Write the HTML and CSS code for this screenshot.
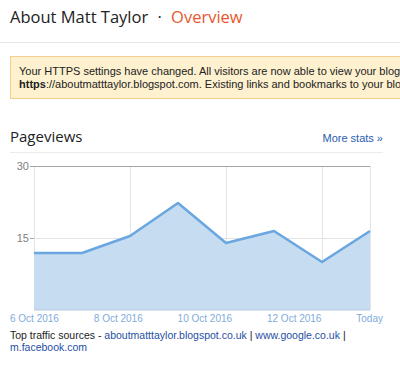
FILE: index.html
```html
<!DOCTYPE html>
<html lang="en">
<head>
    <meta charset="UTF-8">
    <title>About Matt Taylor - Overview</title>
    <link rel="stylesheet" href="styles.css">
</head>
<body>
    <div class="header">
        <span class="blog-name">About Matt Taylor</span>
        <span class="dot">·</span>
        <span class="page-name">Overview</span>
    </div>

    <div class="notice">
        Your HTTPS settings have changed. All visitors are now able to view your blog over
        <b>https</b>://aboutmatttaylor.blogspot.com. Existing links and bookmarks to your blog will still work.
    </div>

    <div class="section">
        <div class="section-head">
            <h2>Pageviews</h2>
            <a class="more" href="#">More stats »</a>
        </div>

        <div class="chart">
            <svg width="373" height="152" viewBox="0 0 373 152">
                <!-- grid -->
                <g stroke="#e3e3e3" stroke-width="1">
                    <line x1="24.5" y1="7" x2="24.5" y2="151"/>
                    <line x1="120.5" y1="7" x2="120.5" y2="151"/>
                    <line x1="216.5" y1="7" x2="216.5" y2="151"/>
                    <line x1="312.5" y1="7" x2="312.5" y2="151"/>
                    <line x1="360.5" y1="7" x2="360.5" y2="151"/>
                    <line x1="20" y1="79.5" x2="360" y2="79.5"/>
                </g>
                <line x1="20" y1="7.5" x2="360" y2="7.5" stroke="#a6a6a6"/>
                <line x1="20" y1="79.5" x2="24" y2="79.5" stroke="#a6a6a6"/>
                <polygon fill="#c5dcf1" points="24,94 72,94 120,77 168,44 216,84 264,72 312,103 360,72 360,151 24,151"/>
                <polyline fill="none" stroke="#6aa6e0" stroke-width="2.5" stroke-linejoin="round"
                    points="24,94 72,94 120,77 168,44 216,84 264,72 312,103 360,72"/>
                <line x1="24" y1="151" x2="360" y2="151" stroke="#b8c8d8"/>
                <text class="ylabel" x="19" y="11" text-anchor="end">30</text>
                <text class="ylabel" x="19" y="83" text-anchor="end">15</text>
            </svg>
            <div class="xlabels">
                <span>6 Oct 2016</span>
                <span>8 Oct 2016</span>
                <span>10 Oct 2016</span>
                <span>12 Oct 2016</span>
                <span>Today</span>
            </div>
        </div>

        <div class="sources">
            Top traffic sources -
            <a href="#">aboutmatttaylor.blogspot.co.uk</a> |
            <a href="#">www.google.co.uk</a> |
            <a href="#">m.facebook.com</a>
        </div>
    </div>
</body>
</html>
```

FILE: styles.css
```css
body {
    margin: 0;
    background: #fff;
    font-family: "Liberation Sans", Arial, sans-serif;
    color: #222;
    overflow: hidden;
}
.header {
    font-family: "Open Sans", sans-serif;
    font-size: 16.5px;
    padding: 5px 10px 0 10px;
    height: 37px;
    border-bottom: 1px solid #e5e5e5;
    white-space: nowrap;
}
.blog-name {
    color: #222;
}
.dot {
    margin: 0 5px;
}
.page-name {
    color: #e8572d;
}
.notice {
    margin: 13px 0 0 10px;
    padding: 8px 8px 7px 8px;
    width: 460px;
    background: #fdf1cf;
    border: 1px solid #f3d08a;
    font-size: 11px;
    line-height: 13px;
    color: #222;
    height: 26px;
    overflow: hidden;
}
.section {
    margin: 27px 17px 0 10px;
}
.section-head {
    display: flex;
    justify-content: space-between;
    align-items: baseline;
    border-bottom: 1px solid #ebebeb;
    padding-bottom: 6px;
}
h2 {
    margin: 0;
    font-family: "Open Sans", sans-serif;
    font-weight: normal;
    font-size: 15px;
    color: #222;
}
.more {
    font-size: 11px;
    color: #2a5db0;
    text-decoration: none;
}
.chart {
    margin-top: 6px;
}
.chart svg {
    display: block;
}
.ylabel {
    font-family: "Liberation Sans", Arial, sans-serif;
    font-size: 11px;
    fill: #808080;
}
.xlabels {
    display: flex;
    justify-content: space-between;
    margin-top: 2px;
    font-size: 10px;
    line-height: 12px;
    color: #7fabdc;
}
.sources {
    margin-top: 4px;
    font-size: 10.5px;
    line-height: 12px;
    color: #222;
}
.sources a {
    color: #1f4fa3;
    text-decoration: none;
}
```
